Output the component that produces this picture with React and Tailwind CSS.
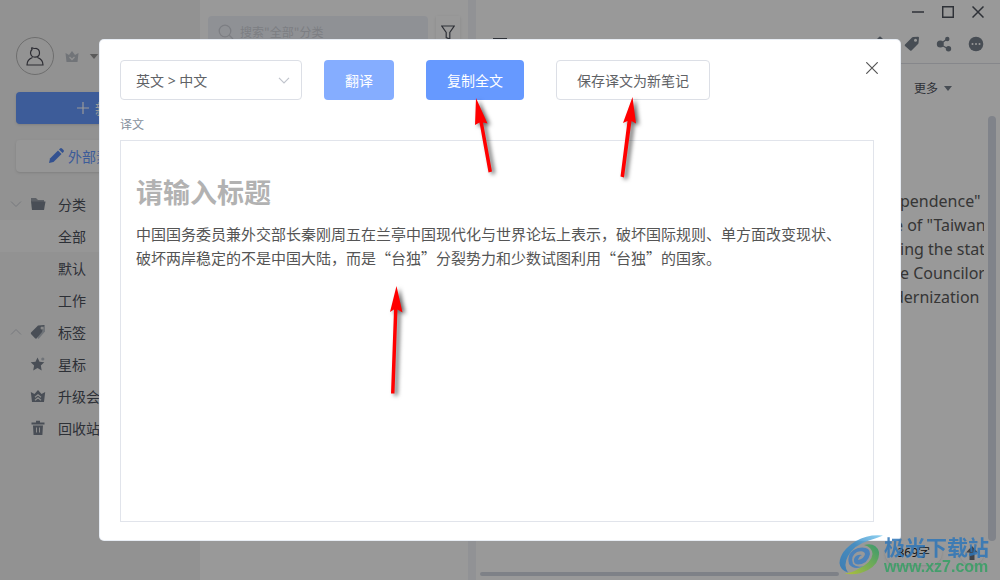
import React from "react";

const ICONS = {
  folder: (
    <>
      <path d="M1 2h5l2 2h6v2H1z" fill="#9aa1aa" />
      <path d="M1 5.5h14.5L14 14H2z" fill="currentColor" />
    </>
  ),
  tag: (
    <>
      <path d="M10 2.500 15 1v6.500L8.500 15l-1-1z" fill="#b9c0c8" />
      <path d="M1 8.500 8 1.500 14.500 1 13 3.500 12 8l-5.500 6.500Q5.800 15 5 14.300L1 10Q.6 9.200 1 8.500Z" fill="currentColor" />
      <circle cx="12" cy="4" r="1.500" fill="#e4e4e4" />
    </>
  ),
  star: (
    <>
      <path d="m7.500 1.500 2 4.200 4.800.6-3.500 3.300.9 4.800-4.200-2.300-4.300 2.300.9-4.800L.7 6.300l4.800-.6z" fill="currentColor" />
      <circle cx="12.800" cy="3" r="1.600" fill="#b9c0c8" />
    </>
  ),
  crown: (
    <>
      <path d="M.8 4 4.500 6 8 2l3.500 4L15.200 4 14 14H2z" fill="currentColor" />
      <path d="m5 9.300 3-2.600 3 2.600M5 12.300l3-2.600 3 2.600" fill="none" stroke="#e9e9e9" strokeWidth="1.200" />
    </>
  ),
  trash: (
    <>
      <path d="M1.500 3.500h13M6 1.800h4" stroke="currentColor" strokeWidth="2" />
      <path d="M3 5.500h10l-.6 9.500H3.600z" fill="currentColor" />
      <path d="M6.500 7.500v5M9.500 7.500v5" stroke="#e9e9e9" />
    </>
  ),
};

const NAV = [
  { label: "分类", icon: "folder", fold: "down" },
  { label: "全部", active: true },
  { label: "默认" },
  { label: "工作" },
  { label: "标签", icon: "tag", fold: "up" },
  { label: "星标", icon: "star" },
  { label: "升级会员", icon: "crown" },
  { label: "回收站", icon: "trash" },
];

function Caret({ className }) {
  return (
    <svg viewBox="0 0 10 6" className={className} aria-hidden="true">
      <path d="M0 0h10L5 6z" fill="currentColor" />
    </svg>
  );
}

function Sidebar() {
  return (
    <aside className="flex w-[200px] shrink-0 flex-col bg-[#f3f3f3]">
      <div className="mt-[37px] flex items-center px-4">
        <button aria-label="个人中心" className="flex size-[38px] items-center justify-center rounded-full border border-[#b8b8b8] bg-[#f5f5f5]">
          <svg viewBox="0 0 18 20" className="h-5 w-[18px] text-[#4a4a55]" fill="none" stroke="currentColor" strokeWidth="1.200" aria-hidden="true">
            <path d="M5.500 1.500 6 3.500Q4.500 5 4.500 7 5 11 9 11.200 13.500 11 13.500 7 13.500 3 10 2.300 8 3 5.500 1.500M6.500 11.500Q1 13.500 1 19h16q0-5.500-5.500-7.500" />
          </svg>
        </button>
        <svg viewBox="0 0 14 13" className="ml-[11px] h-[13px] w-3.5 text-[#bcc1c9]" aria-hidden="true">
          <path d="M.5 3 4 5 7 1l3 4 3.500-2-1 9h-11z" fill="currentColor" />
          <path d="m4.500 7 2.500 2.500L9.500 7" stroke="#f3f3f3" strokeWidth="1.300" fill="none" />
        </svg>
        <Caret className="ml-2.5 h-[5px] w-2.5 text-[#969696]" />
      </div>
      <div className="flex flex-col gap-4 px-4 pt-[17px]">
        <button className="flex h-8 items-center justify-center gap-1.5 rounded bg-[#6699ff] text-[14px] text-white shadow">
          <svg viewBox="0 0 12 12" className="size-3" stroke="currentColor" strokeWidth="1.200" aria-hidden="true">
            <path d="M6 0v12M0 6h12" />
          </svg>
          新建
        </button>
        <button className="flex h-8 items-center gap-1 rounded bg-[#fafafa] pl-8 text-[14px] text-[#6699ff] shadow">
          <svg viewBox="0 0 16 16" className="size-4" aria-hidden="true">
            <path d="m1 15 1-4.500L10 2.500 13.500 6l-8 8z" fill="#5588f0" />
            <path d="m11 1.500 1-1q1-.8 2 0l1.500 1.500q.8 1 0 2l-1 1z" fill="#5588f0" />
          </svg>
          外部素材
        </button>
      </div>
      <nav className="mt-4">
        {NAV.map((item) => (
          <a
            key={item.label}
            href="#"
            className={
              "flex h-8 items-center whitespace-nowrap pl-[10px] text-[14px] text-[#4c505b] " +
              (item.active ? "bg-[#fbfbfb]" : "")
            }
          >
            <span className="w-5">
              {item.fold && (
                <svg viewBox="0 0 12 6" className="h-1.5 w-3 text-[#c5c9d2]" fill="none" stroke="currentColor" aria-hidden="true">
                  <path d={item.fold === "down" ? "m1 .5 5 5 5-5" : "m1 5.500 5-5 5 5"} />
                </svg>
              )}
            </span>
            <span className="w-7">
              {item.icon && (
                <svg viewBox="0 0 16 16" className="size-4 text-[#7a838f]" aria-hidden="true">
                  {ICONS[item.icon]}
                </svg>
              )}
            </span>
            {item.label}
          </a>
        ))}
      </nav>
    </aside>
  );
}

function NoteList() {
  return (
    <section className="flex w-[268px] shrink-0 items-start gap-2 bg-white px-2 pt-4">
      <label className="flex h-8 min-w-0 flex-1 items-center gap-1.5 rounded-sm bg-[#eff2f9] pl-2.5">
        <svg viewBox="0 0 16 16" className="size-4 shrink-0 text-[#cfd2da]" fill="none" stroke="currentColor" strokeWidth="1.300" aria-hidden="true">
          <circle cx="7" cy="7" r="5.800" />
          <path d="m11.300 11.300 3.700 3.700" />
        </svg>
        <input aria-label="搜索" placeholder={'搜索"全部"分类'} className="min-w-0 flex-1 bg-transparent text-[12px] outline-none placeholder:text-[#cfd2da]" />
      </label>
      <button aria-label="筛选" className="flex h-8 w-6 items-center justify-center bg-white shadow-sm">
        <svg viewBox="0 0 14 15" className="h-[15px] w-3.5 text-[#4e525c]" fill="none" stroke="currentColor" strokeWidth="1.200" aria-hidden="true">
          <path d="M.8 1h12.400L8.800 7.500V14l-3.600-1.500v-5z" />
        </svg>
      </button>
    </section>
  );
}

const LINES = [
  { text: 'pendence"', pad: "pl-[420px]" },
  { text: 'e of "Taiwan', pad: "pl-[414px]" },
  { text: "ing the stat", pad: "pl-[420px]" },
  { text: "e Councilor", pad: "pl-[420px]" },
  { text: "dernization", pad: "pl-[414px]" },
];

function Editor() {
  return (
    <main className="flex min-w-0 flex-1 flex-col bg-white">
      <div className="flex h-6 items-center justify-end gap-[18px] pr-4 text-[#4e525c]">
        <button aria-label="最小化">
          <svg viewBox="0 0 12 12" className="size-3" stroke="currentColor" strokeWidth="1.500" aria-hidden="true"><path d="M0 6h12" /></svg>
        </button>
        <button aria-label="最大化">
          <svg viewBox="0 0 12 12" className="size-3" fill="none" stroke="currentColor" strokeWidth="1.500" aria-hidden="true"><path d="M.7.7h10.600v10.600H.7z" /></svg>
        </button>
        <button aria-label="关闭窗口">
          <svg viewBox="0 0 12 12" className="size-3" stroke="currentColor" strokeWidth="1.500" aria-hidden="true"><path d="m.5.500 11 11m0-11-11 11" /></svg>
        </button>
      </div>
      <div className="flex h-10 items-center border-b border-[#dfe2e8] pl-4 pr-4 text-[#77808c]">
        <button aria-label="菜单">
          <svg viewBox="0 0 16 12" className="h-3 w-4 text-[#4e525c]" stroke="currentColor" strokeWidth="2" aria-hidden="true"><path d="M1 1h14M1 6h14M1 11h14" /></svg>
        </button>
        <div className="ml-auto flex gap-4">
          <button aria-label="提醒">
            <svg viewBox="0 0 16 16" className="size-4" fill="currentColor" aria-hidden="true"><path d="M8 .5q1.500 0 1.700 1.500Q13 3.500 13 7v4l1.500 2h-13L3 11V7q0-3.500 3.300-5Q6.500.5 8 .5z" /></svg>
          </button>
          <button aria-label="标签">
            <svg viewBox="0 0 16 16" className="size-4" aria-hidden="true">
              <path d="M1 8.500 8 1.500Q8.500 1 9 1l5-.2q1 0 1 1L14.500 7q0 .5-.5 1l-6.500 6.500q-.7.6-1.400 0L1 10q-.7-.8 0-1.500z" fill="currentColor" />
              <circle cx="11.500" cy="4.200" r="1.500" fill="#fff" />
            </svg>
          </button>
          <button aria-label="分享">
            <svg viewBox="0 0 16 16" className="size-4" fill="currentColor" stroke="currentColor" aria-hidden="true">
              <path d="M4.500 8 11 3M4.500 8.500l7 4" strokeWidth="1.200" />
              <circle cx="4.300" cy="8" r="3.500" stroke="none" /><circle cx="11.300" cy="3" r="2.200" stroke="none" /><circle cx="12.500" cy="12.700" r="2.700" stroke="none" />
            </svg>
          </button>
          <button aria-label="更多操作">
            <svg viewBox="0 0 16 16" className="size-4" aria-hidden="true">
              <circle cx="8" cy="8" r="7.300" fill="currentColor" />
              <circle cx="4.500" cy="8" r="1" fill="#fff" /><circle cx="8" cy="8" r="1" fill="#fff" /><circle cx="11.500" cy="8" r="1" fill="#fff" />
            </svg>
          </button>
        </div>
      </div>
      <div className="flex h-12 items-center justify-end pr-12">
        <button className="flex items-center gap-1.5 text-[12px] text-[#4e525c]">
          更多 <Caret className="h-[5px] w-2 text-[#77808c]" />
        </button>
      </div>
      <div className="flex min-h-0 flex-1 gap-1 pl-1 pr-1 pt-1">
        <div className="min-w-0 flex-1 overflow-hidden pt-[73px]">
          {LINES.map((line) => (
            <p key={line.text} className={"whitespace-nowrap font-['Noto_Sans',sans-serif] text-[16px] leading-6 text-[#5a5a5a] " + line.pad}>
              {line.text}
            </p>
          ))}
        </div>
        <div className="w-2 rounded bg-[#d5dbe6]" />
      </div>
      <div className="flex items-center justify-end gap-[18px] pr-4">
        <span className="rounded-full bg-white px-3 font-['Noto_Sans','Noto_Sans_CJK_SC',sans-serif] text-[12px] leading-6 text-[#222] shadow-sm">369字</span>
        <button aria-label="回到顶部" className="flex size-6 items-center justify-center rounded-full bg-white shadow-sm">
          <svg viewBox="0 0 12 14" className="h-3.5 w-3 text-[#6b7079]" fill="currentColor" aria-hidden="true"><path d="m6 0 6 6.500H8.500V14h-5V6.500H0z" /></svg>
        </button>
      </div>
      <div className="mb-1 ml-1 mr-[161px] mt-[7px] h-1 rounded bg-[#d2d8e2]" />
    </main>
  );
}

function TranslateDialog() {
  return (
    <div className="absolute inset-0 flex bg-black/40 px-[10%] py-10">
      <div role="dialog" aria-label="译文" className="relative flex min-w-0 flex-1 flex-col rounded-sm bg-white pb-[18px] pl-5 pr-[26px] pt-5 ring-1 ring-[#e8edf4]">
        <div className="flex h-10 text-[14px] text-[#606266]">
          <div className="relative mr-[22px] w-[182px]">
            <select aria-label="翻译语言" className="size-full appearance-none rounded border border-[#dcdfe6] bg-white pl-[15px] font-['Noto_Sans','Noto_Sans_CJK_SC',sans-serif] outline-none">
              <option>英文 &gt; 中文</option>
              <option>中文 &gt; 英文</option>
            </select>
            <svg viewBox="0 0 12 7" className="pointer-events-none absolute right-3 top-[17px] h-[7px] w-3 text-[#c0c4cc]" fill="none" stroke="currentColor" strokeWidth="1.200" aria-hidden="true">
              <path d="m1 .8 5 5 5-5" />
            </svg>
          </div>
          <button className="mr-8 rounded bg-[#85adff] px-[21px] text-white">翻译</button>
          <button className="mr-8 rounded bg-[#6699ff] px-[21px] text-white">复制全文</button>
          <button className="rounded border border-[#dcdfe6] bg-white px-5">保存译文为新笔记</button>
        </div>
        <button aria-label="关闭" className="absolute right-[22px] top-[22px]">
          <svg viewBox="0 0 12 12" className="size-3 text-[#555]" stroke="currentColor" strokeWidth="1.200" aria-hidden="true"><path d="m.3.300 11.400 11.400m0-11.400L.3 11.700" /></svg>
        </button>
        <p className="mt-4 text-[12px] leading-4 text-[#86909c]">译文</p>
        <div className="mt-2 flex min-h-0 flex-1 flex-col border border-[#e1e4eb] px-[15px] pt-[31px]">
          <input aria-label="标题" placeholder="请输入标题" className="h-10 shrink-0 text-[27px] font-bold outline-none placeholder:text-[#b2b2b2]" />
          <textarea
            aria-label="译文内容"
            className="mt-2.5 min-h-0 w-full flex-1 resize-none text-[15px] leading-6 text-[#555] outline-none"
            defaultValue={"中国国务委员兼外交部长秦刚周五在兰亭中国现代化与世界论坛上表示，破坏国际规则、单方面改变现状、\n破坏两岸稳定的不是中国大陆，而是“台独”分裂势力和少数试图利用“台独”的国家。"}
          />
        </div>
      </div>
    </div>
  );
}

function Arrows() {
  return (
    <svg viewBox="0 0 1000 580" className="pointer-events-none absolute left-0 top-0 h-[580px] w-[1000px] drop-shadow-[3px_2px_2px_rgba(0,0,0,0.6)]" fill="#ff0000" aria-hidden="true">
      <path d="M476 98 487.500 123.500 483 122.500 492 171.500 488.500 172.500 479.500 122.500 475 125Z" />
      <path d="M632.500 97 636 123.500 631.500 121 624 177.500 620.500 176.500 627.500 121 623 123Z" />
      <path d="M396.500 286 402.500 312.500 397.500 309.500 394.500 393.500 391 393.500 394 309.500 390 312Z" />
    </svg>
  );
}

function Watermark() {
  return (
    <div className="pointer-events-none absolute bottom-1 right-[11px] flex items-center opacity-85">
      <svg viewBox="0 0 46 42" className="h-[42px] w-[46px]" aria-hidden="true">
        <defs>
          <linearGradient id="sweep" x1="0" y1="1" x2="1" y2="0">
            <stop offset="0" stopColor="#2d78b8" />
            <stop offset=".55" stopColor="#3b8cc7" />
            <stop offset="1" stopColor="#7dcbf0" />
          </linearGradient>
          <linearGradient id="leaf" x1="0" y1="1" x2="1" y2="0">
            <stop offset="0" stopColor="#b5c72c" />
            <stop offset="1" stopColor="#2a9a68" />
          </linearGradient>
        </defs>
        <path d="M45 1.500Q30 0 18 7Q2 17 1.500 29Q2 36 10 38.500Q5 31 10 22Q16 11 31 6.500Q38 4.500 45 1.500Z" fill="url(#sweep)" />
        <path d="M26 11Q38 8 41 18Q42 29 30 36Q19 42 6 39.500Q14 39 21 34.500Q34 28 34.500 20Q34 13 26 11Z" fill="url(#leaf)" />
        <path d="M11 30Q8 18 20 14Q32 12 32 20Q30 30 20 30.500Q15 30 16 25Q18 20 24 21Q21 22 20 26Q26 25 27 20Q26 16 19 18Q12 22 15 30Q19 34 26 32Q16 37 11 30Z" fill="#3f7fc0" />
      </svg>
      <div className="flex flex-col">
        <span className="text-[21px] font-bold leading-6 text-[#2f76b8]">极光下载站</span>
        <span className="font-['Liberation_Sans',sans-serif] text-[16px] font-bold leading-[18px] text-[#36a065]">www.xz7.com</span>
      </div>
    </div>
  );
}

export default function App() {
  return (
    <div className="relative flex h-screen min-h-[580px] overflow-hidden font-['Noto_Sans_CJK_SC',sans-serif]">
      <Sidebar />
      <NoteList />
      <div className="w-2 shrink-0 bg-[#f2f3f8]" />
      <Editor />
      <TranslateDialog />
      <Arrows />
      <Watermark />
    </div>
  );
}
